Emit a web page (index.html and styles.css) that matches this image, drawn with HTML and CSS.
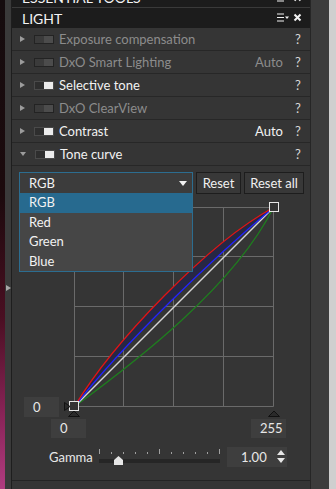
FILE: index.html
```html
<!DOCTYPE html>
<html>
<head>
<meta charset="utf-8">
<link rel="stylesheet" href="styles.css">
</head>
<body>
<div class="screen">
  <div class="desk"></div>
  <div class="rail"><span class="rail-arrow"></span></div>
  <div class="panel">
    <div class="hdr hdr-cut">
      <span class="hdr-title">ESSENTIAL TOOLS</span>
      <svg class="hdr-icons" width="26" height="10" viewBox="0 0 26 10"><path d="M0 1h7M0 4.5h7M0 8h7" stroke="#f2f2f2" stroke-width="1.2"/><path d="M8 3.5h4l-2 2.5z" fill="#f2f2f2"/><path d="M17.5 1.5l6 6M23.5 1.5l-6 6" stroke="#f2f2f2" stroke-width="2"/></svg>
    </div>
    <div class="hdr">
      <span class="hdr-title">LIGHT</span>
      <svg class="hdr-icons" width="26" height="10" viewBox="0 0 26 10"><path d="M0 1h7M0 4.5h7M0 8h7" stroke="#f2f2f2" stroke-width="1.2"/><path d="M8 3.5h4l-2 2.5z" fill="#f2f2f2"/><path d="M17.5 1.5l6 6M23.5 1.5l-6 6" stroke="#f2f2f2" stroke-width="2"/></svg>
    </div>
    <div class="row off"><span class="tri"></span><span class="tog"></span><span class="name">Exposure compensation</span><span class="help">?</span></div>
    <div class="row off"><span class="tri"></span><span class="tog"></span><span class="name">DxO Smart Lighting</span><span class="auto">Auto</span><span class="help">?</span></div>
    <div class="row on"><span class="tri"></span><span class="tog"></span><span class="name">Selective tone</span><span class="help">?</span></div>
    <div class="row off"><span class="tri"></span><span class="tog"></span><span class="name">DxO ClearView</span><span class="help">?</span></div>
    <div class="row on"><span class="tri"></span><span class="tog"></span><span class="name">Contrast</span><span class="auto">Auto</span><span class="help">?</span></div>
    <div class="row on open"><span class="tri"></span><span class="tog"></span><span class="name">Tone curve</span><span class="help">?</span></div>

    <div class="tc-body">
      <div class="controls">
        <div class="dropdown">
          <div class="dd-field"><span>RGB</span><span class="dd-arrow"></span></div>
          <ul class="dd-list">
            <li class="dd-item sel">RGB</li>
            <li class="dd-item">Red</li>
            <li class="dd-item">Green</li>
            <li class="dd-item">Blue</li>
          </ul>
        </div>
        <div class="btn btn-reset">Reset</div>
        <div class="btn btn-resetall">Reset all</div>
      </div>

      <div class="chart-row">
        <div class="vbox vbox-y">0</div>
        <svg class="chart" width="220" height="218" viewBox="0 0 220 218">
          <g stroke="#6a6a6a" stroke-width="1" fill="none">
            <path d="M12.5 7.5V206.5M61.5 7.5V206.5M111.5 7.5V206.5M161.5 7.5V206.5M211.5 7.5V206.5"/>
            <path d="M12.5 7.5H211.5M12.5 56.5H211.5M12.5 106.5H211.5M12.5 156.5H211.5M12.5 206.5H211.5"/>
          </g>
          <path fill="#272744" d="M12.5 206.5C52.3 140.8 145.8 43.3 211.5 7.5C151.8 57.25 62.25 142.8 12.5 206.5Z"/>
          <path fill="none" stroke="#1e7e1e" stroke-width="1.3" d="M12.5 206.5C72.2 162.7 171.7 87.1 211.5 7.5"/>
          <line x1="12.5" y1="206.5" x2="211.5" y2="7.5" stroke="#d4d4d4" stroke-width="1.5"/>
          <path fill="none" stroke="#2222ff" stroke-width="1.3" d="M12.5 206.5C62.25 142.8 151.8 57.25 211.5 7.5"/>
          <path fill="none" stroke="#e21414" stroke-width="1.3" d="M12.5 206.5C52.3 140.8 145.8 43.3 211.5 7.5"/>
          <rect x="7.5" y="201.5" width="9" height="9" fill="#333" stroke="#e6e6e6" stroke-width="1"/>
          <rect x="207.5" y="2.5" width="9" height="9" fill="#333" stroke="#e6e6e6" stroke-width="1"/>
          <path d="M2.5 202.5L8 206.5L2.5 210.5Z" fill="#2a2a2a" stroke="#111" stroke-width="1"/>
          <path d="M6.5 216.5L12 211L17.5 216.5Z" fill="#2a2a2a" stroke="#111" stroke-width="1"/>
          <path d="M206.5 216.5L212 211L217.5 216.5Z" fill="#2a2a2a" stroke="#111" stroke-width="1"/>
        </svg>
      </div>

      <div class="axis-row">
        <div class="vbox">0</div>
        <div class="vbox">255</div>
      </div>

      <div class="gamma-row">
        <span class="gamma-label">Gamma</span>
        <svg class="slider" width="121" height="20" viewBox="0 0 121 20">
          <g stroke="#a0a0a0" stroke-width="1">
            <path d="M0.5 2V7M60.5 2V7M120.5 2V7"/>
            <path d="M12.5 5V7M24.5 5V7M36.5 5V7M48.5 5V7M72.5 5V7M84.5 5V7M96.5 5V7M108.5 5V7"/>
          </g>
          <rect x="0" y="12" width="121" height="4" fill="#262626"/>
          <path d="M15 13L19.5 9L24 13V18H15Z" fill="#e6e6e6"/>
        </svg>
        <div class="numbox"><span>1.00</span>
          <svg width="8" height="14" viewBox="0 0 8 14"><path d="M0 5L4 0L8 5Z M0 8L4 13L8 8Z" fill="#e6e6e6"/></svg>
        </div>
      </div>
    </div>
    <div class="next"></div>
  </div>
  <div class="scroll"></div>
  <div class="edge"></div>
</div>
</body>
</html>
```

FILE: styles.css
```css
* { box-sizing: border-box; }
html, body { margin: 0; padding: 0; }
body {
  width: 336px;
  height: 489px;
  overflow: hidden;
  background: #3b3b3b;
  font-family: "Lato", "Segoe UI", "Noto Sans", sans-serif;
  font-size: 13px;
  color: #eeeeee;
}
.screen { display: flex; height: 489px; }
.desk {
  width: 5px;
  flex: none;
  background: linear-gradient(to bottom, #150c0e 0%, #1c0a0d 40%, #4a0f22 65%, #8a2458 85%, #b03c80 100%);
}
.rail { width: 6px; flex: none; background: #3a3a3a; padding-top: 285px; }
.rail-arrow {
  display: block;
  width: 0; height: 0;
  margin-left: 1px;
  border-left: 5px solid #a8a8a8;
  border-top: 3.5px solid transparent;
  border-bottom: 3.5px solid transparent;
}
.panel {
  width: 300px;
  flex: none;
  border-left: 1px solid #1e1e1e;
  border-right: 1px solid #262626;
  background: #353535;
  display: flex;
  flex-direction: column;
  overflow: hidden;
}
.hdr {
  height: 20px;
  flex: none;
  background: #1c1c1c;
  display: flex;
  align-items: center;
  justify-content: space-between;
  padding: 0 7px 0 10px;
}
.hdr-cut { margin-top: -12px; border-bottom: 1px solid #3a3a3a; }
.hdr-title { font-size: 14px; color: #f4f4f4; }

.row {
  height: 23px;
  flex: none;
  display: flex;
  align-items: center;
  border-bottom: 1px solid #272727;
  padding: 0 9px 0 8px;
}
.tri {
  width: 0; height: 0;
  border-left: 5px solid #9c9c9c;
  border-top: 3.5px solid transparent;
  border-bottom: 3.5px solid transparent;
}
.open .tri {
  border-left: 3px solid transparent;
  border-right: 3px solid transparent;
  border-top: 4px solid #9c9c9c;
  border-bottom: 0;
}
.tog {
  width: 20px;
  height: 9px;
  margin-left: 9px;
  border: 1px solid #232323;
  background: #3b3b3b;
  position: relative;
}
.tog::after {
  content: "";
  position: absolute;
  right: 0; top: 0;
  width: 9px; height: 7px;
  background: #4c4c4c;
}
.on .tog { background: #2e2e2e; border-color: #4a4a4a; }
.on .tog::after { background: #ececec; }
.name { flex: 1; margin-left: 5px; }
.off .name, .off .auto { color: #8c8c8c; }
.on .name, .on .auto { color: #f2f2f2; }
.auto { margin-right: 12px; }
.help { color: #d8d8d8; width: 6px; }

.tc-body {
  flex: none;
  height: 315px;
  padding: 6px 0 0 7px;
  border-bottom: 1px solid #242424;
}
.controls { display: flex; gap: 3px; height: 22px; }
.dropdown { position: relative; width: 174px; }
.dd-field {
  height: 22px;
  border: 1px solid #2c6d90;
  background: #3c3c3c;
  display: flex;
  align-items: center;
  justify-content: space-between;
  padding: 0 5px 0 9px;
  color: #f2f2f2;
}
.dd-arrow {
  width: 0; height: 0;
  border-left: 4px solid transparent;
  border-right: 4px solid transparent;
  border-top: 5px solid #f2f2f2;
}
.dd-list {
  position: absolute;
  top: 21px; left: 0;
  width: 174px;
  margin: 0; padding: 0;
  list-style: none;
  background: #464646;
  border: 1px solid #2c6d90;
  border-top: 0;
  z-index: 2;
}
.dd-item { height: 19.5px; line-height: 19.5px; padding-left: 9px; color: #f2f2f2; }
.dd-item.sel { background: #276a8f; }
.btn {
  height: 22px;
  border: 1px solid #1d1d1d;
  background: #383838;
  color: #f0f0f0;
  display: flex;
  align-items: center;
  justify-content: center;
}
.btn-reset { width: 45px; }
.btn-resetall { width: 60px; }

.chart-row { display: flex; margin-top: 6px; height: 218px; }
.vbox {
  width: 35px;
  height: 19px;
  line-height: 19px;
  background: #3e3e3e;
  color: #e8e8e8;
  padding-left: 9px;
}
.vbox-y { margin-left: 5px; align-self: flex-end; margin-bottom: 1px; height: 20px; line-height: 20px; }
.chart { display: block; margin-left: 3px; }
.axis-row { display: flex; gap: 165px; margin-top: 1px; padding-left: 32px; }

.gamma-row { display: flex; align-items: center; height: 20px; margin-top: 9px; padding-left: 30px; }
.gamma-label { width: 50px; color: #e8e8e8; }
.slider { display: block; }
.numbox {
  width: 60px;
  height: 20px;
  margin-left: 7px;
  background: #3e3e3e;
  color: #e8e8e8;
  display: flex;
  align-items: center;
  justify-content: space-between;
  padding: 0 2px 0 14px;
}
.numbox svg { display: block; }
.next { flex: 1; background: #353535; }
.scroll { width: 18px; flex: none; background: #3c3c3c; }
.edge { width: 7px; flex: none; background: #cfcfcf; }
```
